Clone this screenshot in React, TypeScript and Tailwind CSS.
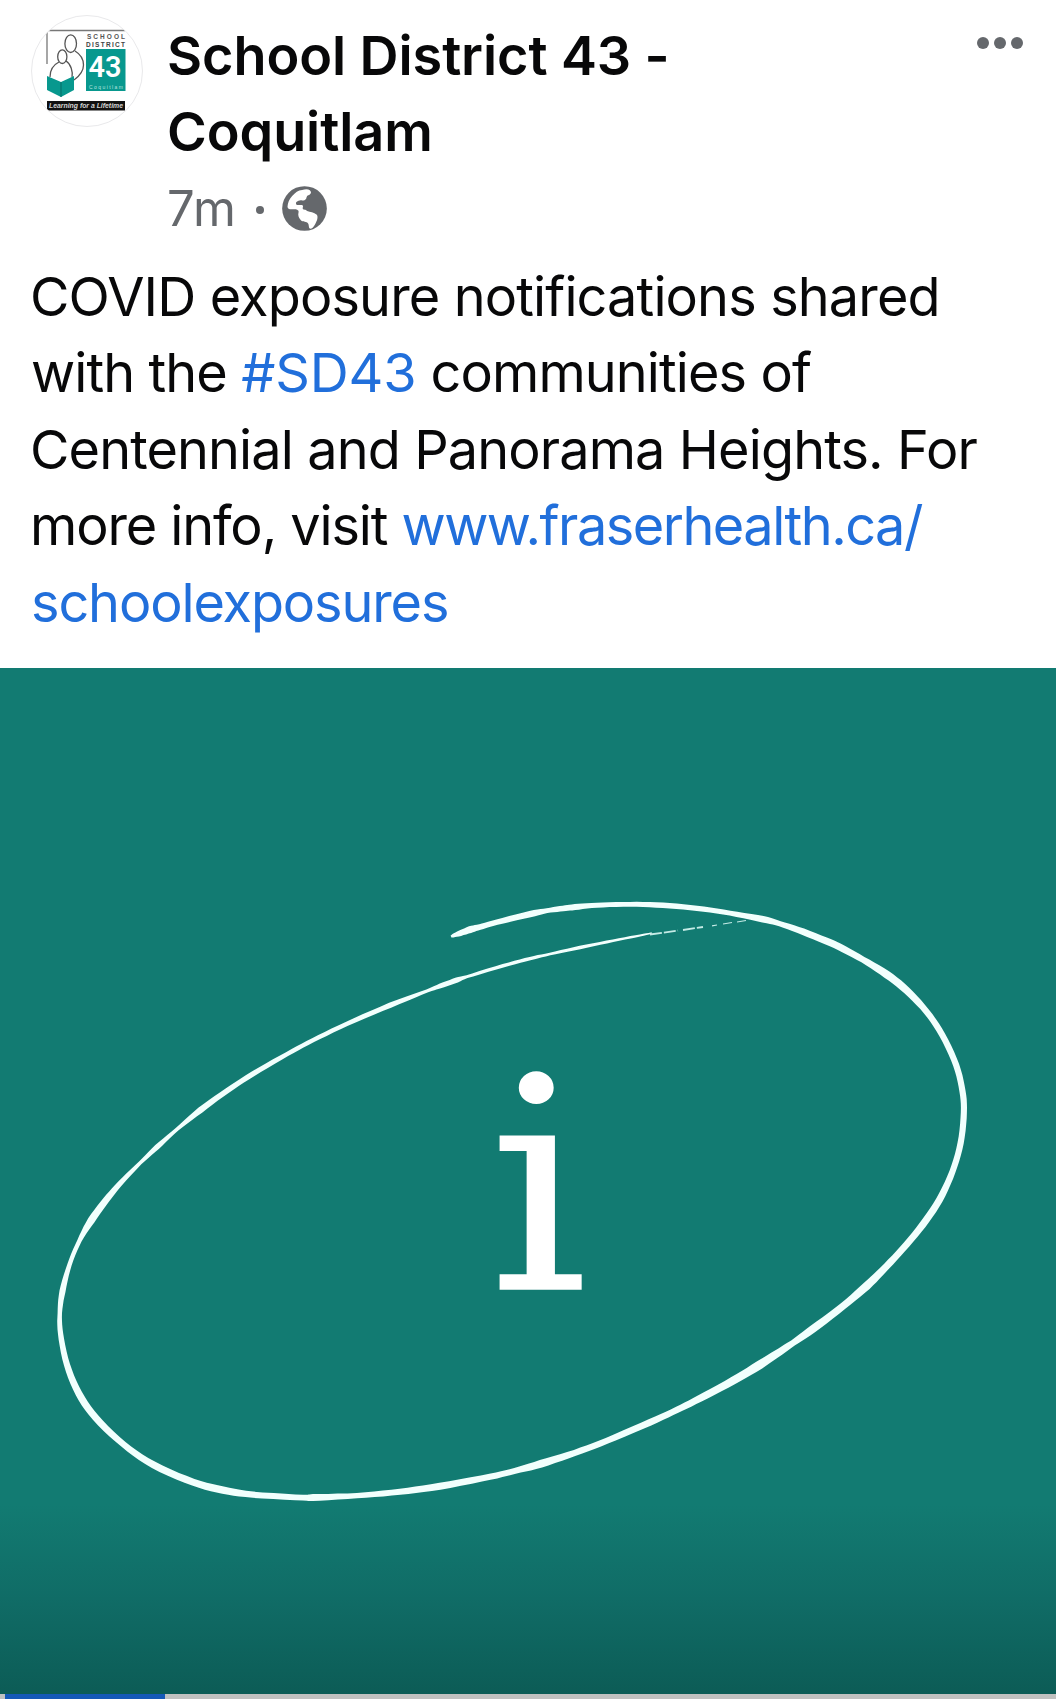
type BrushPoint = [x: number, y: number, width: number];

const BRUSH: BrushPoint[] = [
  [451, 937.5, 2.5], [458, 935, 6], [470, 930.5, 8], [480, 928, 6.5], [497, 923, 6], [530, 915, 7.5], [547, 911.5, 5.5], [563, 909.5, 6.5],
  [575, 908, 7], [597, 906, 5.5], [630, 905, 5.5], [663, 906, 6.5], [697, 909, 6], [730, 914, 5.5], [763, 920, 7.5],
  [780, 924.5, 6], [803, 932.5, 7.5], [830, 943.5, 8], [840, 948, 8], [863, 960.5, 7], [887, 975, 9], [907, 991, 8.5],
  [927, 1012, 7], [943, 1036, 7], [957, 1065.5, 7], [963, 1092, 7], [964.5, 1113.5, 7], [961.5, 1144, 7], [953, 1173, 7],
  [940, 1201.5, 8], [923, 1226, 8], [903, 1250, 7.5], [883, 1271, 8], [867, 1287, 9.5], [843, 1307.6, 8],
  [813, 1330, 9], [793, 1344, 7], [760, 1366, 10], [733, 1382, 9], [700, 1399.5, 8], [677, 1411, 7], [650, 1423.5, 7.5],
  [607, 1442, 7], [575, 1454, 7], [541, 1465, 9], [515, 1472, 6.5], [490, 1478, 7], [440, 1487.6, 8], [400, 1493, 7],
  [357, 1497, 6], [313, 1498.6, 8], [303, 1498.8, 6.5], [253, 1496.3, 7], [223, 1491.5, 8.5], [193, 1484, 8], [153, 1467, 8],
  [123, 1446, 7], [95, 1419.5, 8], [78, 1395, 8], [66, 1366, 7], [60, 1335, 6], [59.3, 1314, 5], [62, 1292, 7],
  [69, 1265.6, 5], [79, 1241.5, 5], [91, 1221, 8.5], [106, 1201, 7.5], [120, 1184, 6], [140, 1164, 4], [157, 1148, 6],
  [177, 1130, 4], [200, 1111, 7], [227, 1091.5, 6], [253, 1074.5, 6], [287, 1055, 5], [313, 1041, 5], [347, 1024.5, 5],
  [390, 1006, 6], [427, 992, 3.5], [440, 987, 5.5], [457, 981, 6], [467, 977.6, 3.5], [503, 966.6, 4], [530, 959.5, 4],
  [550, 955, 3], [580, 948.5, 4], [613, 941.7, 3], [640, 936.5, 2.5], [652, 934, 1.5],
];

/** Evens out the centre line, leaving the brush widths as they are. */
function relax(points: BrushPoint[]): BrushPoint[] {
  return points.map((p, i) => {
    if (i === 0 || i === points.length - 1) return p;
    const a = points[i - 1];
    const b = points[i + 1];
    const da = Math.hypot(p[0] - a[0], p[1] - a[1]);
    const db = Math.hypot(b[0] - p[0], b[1] - p[1]);
    const t = da / (da + db);
    const mx = a[0] + (b[0] - a[0]) * t;
    const my = a[1] + (b[1] - a[1]) * t;
    return [p[0] * 0.7 + mx * 0.3, p[1] * 0.7 + my * 0.3, p[2]];
  });
}

/** Catmull-Rom interpolation of the stroke's centre line and width. */
function resample(points: BrushPoint[], steps: number): BrushPoint[] {
  const out: BrushPoint[] = [];
  for (let i = 0; i < points.length - 1; i++) {
    const a = points[Math.max(0, i - 1)];
    const b = points[i];
    const c = points[i + 1];
    const d = points[Math.min(points.length - 1, i + 2)];
    for (let s = 0; s < steps; s++) {
      const t = s / steps;
      const at = (k: 0 | 1) =>
        0.5 * (2 * b[k] + (c[k] - a[k]) * t + (2 * a[k] - 5 * b[k] + 4 * c[k] - d[k]) * t * t + (3 * b[k] - a[k] - 3 * c[k] + d[k]) * t * t * t);
      out.push([at(0), at(1), b[2] + (c[2] - b[2]) * t]);
    }
  }
  out.push(points[points.length - 1]);
  return out;
}

function brushOutline(points: BrushPoint[]): string {
  const line = resample(points, 5);
  const left: string[] = [];
  const right: string[] = [];
  line.forEach(([x, y, w], i) => {
    const p = line[Math.max(0, i - 1)];
    const n = line[Math.min(line.length - 1, i + 1)];
    const len = Math.hypot(n[0] - p[0], n[1] - p[1]) || 1;
    const half = w * 0.44;
    const nx = (-(n[1] - p[1]) / len) * half;
    const ny = ((n[0] - p[0]) / len) * half;
    left.push(`${(x + nx).toFixed(1)} ${(y + ny).toFixed(1)}`);
    right.unshift(`${(x - nx).toFixed(1)} ${(y - ny).toFixed(1)}`);
  });
  return `M${left.concat(right).join("L")}Z`;
}

const OUTLINE = brushOutline(relax(BRUSH));

function Logo() {
  return (
    <svg viewBox="1 1 112 112" className="size-28">
      <g fill="none" stroke="#555" strokeWidth="1.3">
        <path d="M16 49V15.500H94" stroke="#777" />
        <ellipse cx="39.700" cy="28.700" rx="5.800" ry="8.800" />
        <ellipse cx="31.300" cy="41.700" rx="4.600" ry="6.800" />
        <path d="M44 36c5 3 8.500 8 8.500 14c0 6-4 11-9.500 15M28 47c-6 3-9 8-9 15M35 46c5 3 7 11 6 16" />
      </g>
      <path d="M16 61l14 6 13-6v14l-13 7-14-7z" fill="#08988e" />
      <path d="M30 67v15" stroke="#066d67" strokeWidth="1" />
      <rect x="55" y="34" width="39.500" height="42" fill="#08988e" />
      <g fontFamily="Liberation Sans" fontWeight="700">
        <text x="56" y="23.500" fontSize="6.500" textLength="38" fill="#555">SCHOOL</text>
        <text x="55" y="31.500" fontSize="6.500" textLength="39" fill="#444">DISTRICT</text>
      </g>
      <text x="57.500" y="62" fontFamily="Roboto" fontWeight="600" fontSize="29" textLength="33" lengthAdjust="spacingAndGlyphs" fill="#fff">43</text>
      <text x="58" y="73.800" fontFamily="Liberation Sans" fontSize="5" textLength="34" fill="#b5e3df">Coquitlam</text>
      <rect x="16" y="86" width="78" height="9.500" fill="#111" />
      <text x="18" y="93.300" fontFamily="Liberation Sans" fontStyle="italic" fontWeight="700" fontSize="7" textLength="74" lengthAdjust="spacingAndGlyphs" fill="#d4d4d4">Learning for a Lifetime</text>
    </svg>
  );
}

function Globe() {
  return (
    <svg viewBox="11.500 11 135 135" className="size-[45px]">
      <circle cx="79" cy="78.500" r="67" fill="#65686c" />
      <path
        d="M28 73C29 62 33 50 42 41C51 31 60 24 72 23C82 20 90 20 95 24C100 29 100 34 93 38C85 40 86 44 84 49C81 54 74 55 68 54C58 55 50 60 55 67C60 70 66 66 73 69C77 72 72 76 74 80C76 83 82 80 87 86C96 89 107 90 116 97C121 104 116 117 110 127C105 135 102 139 96 139C90 136 94 126 88 121C82 117 71 119 67 112C61 105 59 97 61 91C63 84 57 82 50 81C40 80 29 83 28 73Z"
        fill="#fff"
      />
    </svg>
  );
}

function Header() {
  return (
    <header className="flex items-start pt-[18px] pr-8 pl-[31px]">
      <div className="-mt-[3px] size-28 shrink-0 overflow-hidden rounded-full border border-[#e9e9eb] bg-white">
        <Logo />
      </div>
      <div className="ml-6 w-[560px]">
        <h1 className="text-[54px] leading-[76.450px] font-semibold tracking-[-0.080px] text-[#080809]">
          School District 43 - Coquitlam
        </h1>
        <div className="flex h-[76px] items-center text-[#65686c]">
          <span className="text-[49px] leading-[76px] tracking-[0.800px]">7m</span>
          <span className="mt-0.5 ml-[19px] size-2 rounded-full bg-[#65686c]" />
          <span className="ml-[18px]">
            <Globe />
          </span>
        </div>
      </div>
      <button className="mt-[19px] mr-px -ml-px flex flex-1 justify-end gap-[5px]" aria-label="More options">
        <span className="size-3 rounded-full bg-[#65686c]" />
        <span className="size-3 rounded-full bg-[#65686c]" />
        <span className="size-3 rounded-full bg-[#65686c]" />
      </button>
    </header>
  );
}

function Message() {
  return (
    <div className="mt-3 pl-[30px] text-[54px] leading-[76.450px] whitespace-pre text-[#080809]">
      <p className="tracking-[-0.860px]">COVID exposure notifications shared</p>
      <p className="pl-px tracking-[-0.900px]">
        with the <a className="tracking-[-0.200px] text-[#216fdb]">#SD43</a>
        <span className="tracking-[-0.900px]"> communities of</span>
      </p>
      <p className="tracking-[-0.880px]">Centennial and Panorama Heights. For</p>
      <p className="tracking-[-1.100px]">
        more info, visit <a className="tracking-[-1.500px] text-[#216fdb]">www.fraserhealth.ca/</a>
      </p>
      <p className="pl-px">
        <a className="tracking-[-1.120px] text-[#216fdb]">schoolexposures</a>
      </p>
    </div>
  );
}

function Artwork() {
  return (
    <section className="relative mt-[27px] flex-1 bg-[#127b72]">
      <div className="absolute inset-x-0 bottom-0 h-[190px] bg-linear-to-b from-[#127b72] via-[#106c66] to-[#0c5c56]" />
      <svg viewBox="0 669 1056 1025" className="relative block h-[1025px] w-full" fill="#f2fffd">
        <path d={OUTLINE} />
        <g stroke="#c5ebe6" fill="none" strokeWidth="1.800">
          <path d="M650 935.500L678 931.500M683 931L703 928" strokeDasharray="12 2" />
          <path d="M712 926.800l5-.800M723 925l9-1.500M737 923l9-1.500" strokeWidth="1.200" />
        </g>
        <text transform="translate(488.200 1290.700) scale(1.060 1)" fontFamily="DejaVu Serif" fontSize="297" fill="#fff">i</text>
      </svg>
    </section>
  );
}

export default function App() {
  return (
    <main className="flex h-[1699px] w-[1056px] flex-col overflow-hidden bg-white font-['Inter',sans-serif]">
      <Header />
      <Message />
      <Artwork />
      <div className="flex h-[5px] shrink-0 bg-[#c0c1c0] pl-[5px]">
        <div className="h-full w-40 bg-[#1559b7]" />
      </div>
    </main>
  );
}
